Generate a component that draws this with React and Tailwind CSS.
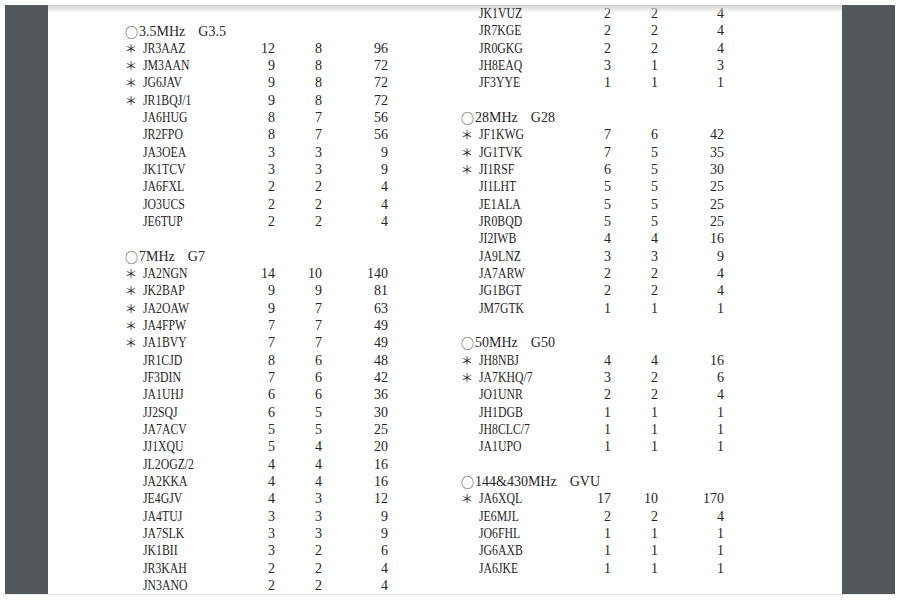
const left = [
  { head: ['3.5MHz', 'G3.5'] },
  ['*', 'JR3AAZ', 12, 8, 96],
  ['*', 'JM3AAN', 9, 8, 72],
  ['*', 'JG6JAV', 9, 8, 72],
  ['*', 'JR1BQJ/1', 9, 8, 72],
  ['', 'JA6HUG', 8, 7, 56],
  ['', 'JR2FPO', 8, 7, 56],
  ['', 'JA3OEA', 3, 3, 9],
  ['', 'JK1TCV', 3, 3, 9],
  ['', 'JA6FXL', 2, 2, 4],
  ['', 'JO3UCS', 2, 2, 4],
  ['', 'JE6TUP', 2, 2, 4],
  null,
  { head: ['7MHz', 'G7'] },
  ['*', 'JA2NGN', 14, 10, 140],
  ['*', 'JK2BAP', 9, 9, 81],
  ['*', 'JA2OAW', 9, 7, 63],
  ['*', 'JA4FPW', 7, 7, 49],
  ['*', 'JA1BVY', 7, 7, 49],
  ['', 'JR1CJD', 8, 6, 48],
  ['', 'JF3DIN', 7, 6, 42],
  ['', 'JA1UHJ', 6, 6, 36],
  ['', 'JJ2SQJ', 6, 5, 30],
  ['', 'JA7ACV', 5, 5, 25],
  ['', 'JJ1XQU', 5, 4, 20],
  ['', 'JL2OGZ/2', 4, 4, 16],
  ['', 'JA2KKA', 4, 4, 16],
  ['', 'JE4GJV', 4, 3, 12],
  ['', 'JA4TUJ', 3, 3, 9],
  ['', 'JA7SLK', 3, 3, 9],
  ['', 'JK1BII', 3, 2, 6],
  ['', 'JR3KAH', 2, 2, 4],
  ['', 'JN3ANO', 2, 2, 4],
];

const right = [
  ['', 'JK1VUZ', 2, 2, 4],
  ['', 'JR7KGE', 2, 2, 4],
  ['', 'JR0GKG', 2, 2, 4],
  ['', 'JH8EAQ', 3, 1, 3],
  ['', 'JF3YYE', 1, 1, 1],
  null,
  { head: ['28MHz', 'G28'] },
  ['*', 'JF1KWG', 7, 6, 42],
  ['*', 'JG1TVK', 7, 5, 35],
  ['*', 'JI1RSF', 6, 5, 30],
  ['', 'JI1LHT', 5, 5, 25],
  ['', 'JE1ALA', 5, 5, 25],
  ['', 'JR0BQD', 5, 5, 25],
  ['', 'JI2IWB', 4, 4, 16],
  ['', 'JA9LNZ', 3, 3, 9],
  ['', 'JA7ARW', 2, 2, 4],
  ['', 'JG1BGT', 2, 2, 4],
  ['', 'JM7GTK', 1, 1, 1],
  null,
  { head: ['50MHz', 'G50'] },
  ['*', 'JH8NBJ', 4, 4, 16],
  ['*', 'JA7KHQ/7', 3, 2, 6],
  ['', 'JO1UNR', 2, 2, 4],
  ['', 'JH1DGB', 1, 1, 1],
  ['', 'JH8CLC/7', 1, 1, 1],
  ['', 'JA1UPO', 1, 1, 1],
  null,
  { head: ['144&430MHz', 'GVU'] },
  ['*', 'JA6XQL', 17, 10, 170],
  ['', 'JE6MJL', 2, 2, 4],
  ['', 'JO6FHL', 1, 1, 1],
  ['', 'JG6AXB', 1, 1, 1],
  ['', 'JA6JKE', 1, 1, 1],
];

const cjk = { fontFamily: '"Noto Sans CJK JP", sans-serif' };

function Row({ item }) {
  if (!item) return <div className="h-[17.33px]" />;
  if (item.head) {
    return (
      <div className="flex items-center h-[17.33px] leading-[17.33px] whitespace-pre">
        <span className="w-[13px] shrink-0 overflow-hidden text-[13px] font-light leading-[17.33px]" style={cjk}>○</span>
        <span className="pl-[1px]">{item.head[0]}</span>
        <span className="w-[13px] shrink-0" />
        <span>{item.head[1]}</span>
      </div>
    );
  }
  const [star, call, a, b, c] = item;
  return (
    <div className="grid grid-cols-[18px_102px_30px_47px_66px] h-[17.33px] leading-[17.33px]">
      <span className="text-[12px] overflow-hidden" style={cjk}>{star ? '＊' : ''}</span>
      <span className="inline-block origin-left scale-x-[0.84] whitespace-nowrap">{call}</span>
      <span className="text-right">{a}</span>
      <span className="text-right">{b}</span>
      <span className="text-right">{c}</span>
    </div>
  );
}

export default function App() {
  return (
    <div className="w-[900px] h-[600px] bg-white p-[5px] pb-0 overflow-hidden">
      <div className="flex h-[590px] bg-[#53575a] border-b border-[#e6e6e6]">
        <div className="w-[43px] shrink-0" />
        <div className="relative w-[794px] shrink-0 bg-white overflow-hidden">
          <div className="absolute top-0 left-0 right-0 h-[8px] bg-gradient-to-b from-[#cfcfcf] to-white/0" />
          <div
            className="flex pl-[77px] text-[14px] text-[#262626]"
            style={{ fontFamily: '"Liberation Serif", "Noto Sans CJK JP", serif' }}
          >
            <div className="w-[336px] pt-[17.5px]">
              {left.map((it, i) => <Row key={i} item={it} />)}
            </div>
            <div className="w-[336px]">
              {right.map((it, i) => <Row key={i} item={it} />)}
            </div>
          </div>
        </div>
        <div className="flex-1" />
      </div>
    </div>
  );
}
